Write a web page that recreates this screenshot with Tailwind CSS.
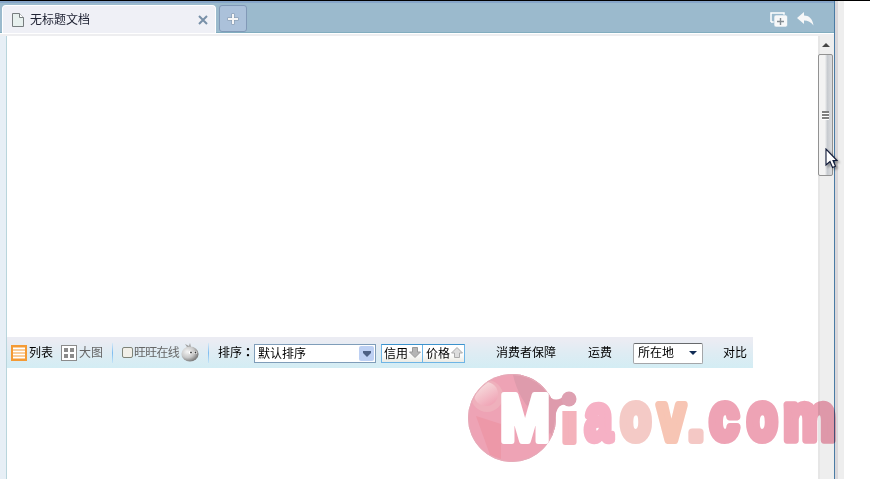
<!DOCTYPE html>
<html lang="zh-CN">
<head>
<meta charset="utf-8">
<title>无标题文档</title>
<script src="https://cdn.jsdelivr.net/npm/@tailwindcss/browser@4"></script>
</head>
<body class="w-[870px] h-[479px] overflow-hidden bg-white text-black text-[12px] leading-[16px] font-['Liberation_Sans','Noto_Sans_CJK_SC',sans-serif]">
<div class="relative flex h-[479px] border-t border-black">
  <div class="flex w-[834px] shrink-0 flex-col">
    <header class="flex h-[32px] shrink-0 items-start border-t-2 border-t-[#86a5c9] border-b border-b-[#82adbf] bg-[#9bbacd]">
      <div class="ml-[2px] mt-[2px] flex h-[28px] w-[214px] items-center rounded-t-[4px] border border-b-0 border-white bg-[#eff0f6] pl-[9px] pr-[7px] text-[#202334]">
        <svg width="12" height="14" viewBox="0 0 12 14" class="shrink-0"><path d="M.5.5h7l4 4v9H.5z" fill="#e7f0ee" stroke="#777d7f"/><path d="M7.5.5v4h4" fill="#fff" stroke="#777d7f"/></svg>
        <span class="ml-[6px] whitespace-nowrap">无标题文档</span>
        <svg class="ml-auto" width="10" height="10" viewBox="0 0 10 10"><path d="M1 1l8 8M9 1L1 9" stroke="#7890a8" stroke-width="2"/></svg>
      </div>
      <div class="ml-[3px] mt-[2px] flex h-[27px] w-[28px] items-center justify-center rounded-[3px] border border-[#8199b7] bg-[#abc1da]">
        <svg width="12" height="12" viewBox="0 0 12 12"><path d="M6 .5v11M.5 6h11" stroke="#8395a8" stroke-width="3"/><path d="M6 1v10M1 6h10" stroke="#f6f6f6" stroke-width="2"/></svg>
      </div>
      <div class="ml-auto mr-[20px] mt-[9px] flex gap-[9px]">
        <svg width="18" height="16" viewBox="0 0 18 16"><path d="M1 10V1h13v2M1 10h3" fill="none" stroke="#fff" stroke-width="1.5"/><rect x="4" y="3" width="13.5" height="12" rx="2" fill="#f7f8f9" stroke="#9bbacd" stroke-width=".6"/><path d="M10.500 6v7M7 9.500h7" stroke="#858d93" stroke-width="1.400"/></svg>
        <svg width="17" height="14" viewBox="0 0 17 14"><path d="M0 6L7 0v3.500c5 0 8.500 3 9.500 10C14 10 11 8.500 7 8.500V12z" fill="#f6f7f8"/></svg>
      </div>
    </header>
    <div class="h-[3px] shrink-0 border-t border-white bg-[#eeeef0]"></div>
    <div class="flex flex-1">
      <div class="w-[7px] shrink-0 border-r border-[#b9d5dc] bg-[#e7eff6]"></div>
      <main class="flex w-[811px] shrink-0 flex-col">
        <div class="h-[301px] shrink-0"></div>
        <div class="flex h-[31px] w-[746px] shrink-0 items-center whitespace-nowrap bg-linear-to-b from-[#ebecf3] from-10% via-[#dfecf3] via-50% to-[#d3edf4]">
          <svg class="ml-[4px] mt-px" width="16" height="16" viewBox="0 0 16 16"><rect width="16" height="16" fill="#f49a34"/><path d="M2 3.500h12M2 6.500h12M2 9.500h12M2 12.500h12" stroke="#fff" stroke-width="2"/></svg>
          <span class="ml-[2px] w-[24px]">列表</span>
          <svg class="ml-[8px] mt-px" width="16" height="16" viewBox="0 0 16 16"><rect x=".5" y=".5" width="15" height="15" fill="#fff" stroke="#8b8b8b"/><path d="M3 3h4v4H3zM9 3h4v4H9zM3 9h4v4H3zM9 9h4v4H9z" fill="#8b8b8b"/></svg>
          <span class="ml-[2px] w-[24px] text-[#666]">大图</span>
          <span class="ml-[9px] h-[20px] w-px bg-linear-to-b from-[#d5e9f7] via-[#7dbcf0] to-[#c5e5f8]"></span>
          <span class="ml-[9px] h-[11px] w-[11px] rounded-[2px] border border-[#7f8378] bg-[#f1efe8]"></span>
          <span class="ml-[1px] w-[47px] tracking-[-0.75px] text-[#666]">旺旺在线</span>
          <svg width="18" height="19" viewBox="0 0 18 19"><defs><radialGradient id="ball" cx=".35" cy=".35" r=".65"><stop stop-color="#f4f4f4"/><stop offset=".6" stop-color="#c8c8c8"/><stop offset="1" stop-color="#808080"/></radialGradient></defs><path d="M6 4L4 1l4 2 1-3 1 4z" fill="#a0a0a0"/><ellipse cx="9" cy="11" rx="8.600" ry="7.500" fill="url(#ball)"/><circle cx="9.500" cy="9.500" r="1.800" fill="#fff"/><circle cx="14.500" cy="9.500" r="1.600" fill="#fff"/><circle cx="10" cy="9.500" r=".9" fill="#333"/><circle cx="14.500" cy="9.500" r=".9" fill="#333"/></svg>
          <span class="ml-[9px] h-[20px] w-px bg-linear-to-b from-[#d5e9f7] via-[#7dbcf0] to-[#c5e5f8]"></span>
          <span class="ml-[9px] w-[36px]">排序<span lang="zh-TW" class="font-['Noto_Sans_CJK_TC'] font-bold">：</span></span>
          <div class="mt-[2px] flex h-[19px] w-[122px] items-center border border-[#7f9db9] bg-white pl-[3px] pr-px">
            <span>默认排序</span>
            <span class="ml-auto flex h-[15px] w-[15px] items-center justify-center rounded-[2px] bg-[#bdd0f3]"><svg width="8" height="6" viewBox="0 0 8 6"><path d="M0 0h8v2L4 6 0 2z" fill="#4d6185"/></svg></span>
          </div>
          <div class="ml-[5px] mt-[2px] flex h-[19px] w-[84px] border border-[#6eb5e5] border-t-[#3c92cc] bg-linear-to-b from-white from-50% to-[#ebebe5]">
            <div class="flex w-[41px] items-center border-r border-[#6eb5e5] pl-[2px]"><span class="w-[25px]">信用</span><svg class="-mt-[2px]" width="12" height="11" viewBox="0 0 12 11"><path d="M3.500.5h5V5h3L6 10.500.5 5h3z" fill="#b5b5b5" stroke="#999"/></svg></div>
            <div class="flex items-center pl-[3px]"><span class="w-[25px]">价格</span><svg class="-mt-[2px]" width="12" height="11" viewBox="0 0 12 11"><path d="M3.500 10.500h5V6h3L6 .5.5 6h3z" fill="#ddd" stroke="#aaa"/></svg></div>
          </div>
          <span class="ml-[31px] w-[60px]">消费者保障</span>
          <span class="ml-[32px] w-[24px]">运费</span>
          <div class="ml-[21px] mt-px flex h-[21px] w-[70px] items-center rounded-[2px] border border-[#a4a6a9] border-t-[#67696c] bg-white pl-[4px] pr-[5px]">
            <span>所在地</span>
            <svg class="ml-auto" width="8" height="4" viewBox="0 0 8 4"><path d="M0 0h8L4 4z" fill="#112c55"/></svg>
          </div>
          <span class="ml-[20px] w-[24px]">对比</span>
        </div>
      </main>
      <aside class="flex w-[16px] shrink-0 flex-col border-l-2 border-[#e6e6e6] bg-[#eee]">
        <svg class="ml-[2px] mt-[7px] shrink-0" width="8" height="4" viewBox="0 0 8 4"><path d="M4 0l4 4H0z" fill="#454545"/></svg>
        <div class="-ml-[2px] mt-[7px] flex h-[122px] w-[15px] shrink-0 items-center justify-center rounded-[2px] border border-[#929292] bg-linear-to-r from-[#f3f3f3] from-45% via-[#c7cbd0] via-65% to-[#dcdde0]">
          <svg width="8" height="9" viewBox="0 0 8 9"><path d="M0 1.500h7M0 4.500h7M0 7.500h7" stroke="#fff" stroke-width="3"/><path d="M0 1h7M0 4h7M0 7h7" stroke="#555" stroke-width="1.300"/></svg>
        </div>
      </aside>
    </div>
  </div>
  <div class="w-px bg-[#4a7ba4]"></div>
  <div class="w-[3px] bg-[#dad7da]"></div>
  <div class="w-[6px] bg-[#eee]"></div>

  <svg class="absolute left-[465px] top-[367px] overflow-visible" width="390" height="100" viewBox="465 368 390 100">
    <defs>
      <clipPath id="disc"><circle cx="512" cy="418" r="44"/></clipPath>
      <clipPath id="stem"><path d="M555 411h30v40h-30z"/></clipPath>
      <linearGradient id="shine" x2=".6" y2="1"><stop stop-color="#f8e9e6"/><stop offset="1" stop-color="#f0a6b7"/></linearGradient>
    </defs>
    <circle cx="512" cy="418" r="44" fill="#eea3b5"/>
    <g clip-path="url(#disc)">
      <path d="M512 370Q517 399 538 418T548 446L570 430V370z" fill="#de9bac"/>
      <path d="M476 416L501 424V459L490 455z" fill="#ed98a8"/>
      <circle cx="487" cy="396" r="16" fill="#efb0bc"/>
      <circle cx="486" cy="394" r="12" fill="url(#shine)"/>
    </g>
    <circle cx="512" cy="418" r="43.500" fill="none" stroke="#e5acb9"/>
    <path d="M546 393Q555 405 565 395L572 406Q559 401 556 413L553 427 546 440z" fill="#de9bac"/>
    <circle cx="569" cy="399" r="7.500" fill="#dea0b1"/>
    <g font-family="Liberation Sans, sans-serif" font-weight="700" stroke-width="9" stroke-linejoin="round">
      <text x="500" y="441" font-size="66" textLength="50" lengthAdjust="spacingAndGlyphs" fill="#fff" stroke="#fff" stroke-width="6">M</text>
      <text x="561" y="441.500" font-size="64" textLength="17" lengthAdjust="spacingAndGlyphs" fill="#f4b2bb" stroke="#f4b2bb" stroke-width="6" clip-path="url(#stem)">i</text>
      <text x="585" y="439.500" font-size="64" textLength="27" lengthAdjust="spacingAndGlyphs" fill="#f6b1c5" stroke="#f6b1c5" stroke-width="7.500">a</text>
      <text x="621" y="439" font-size="64" textLength="29.500" lengthAdjust="spacingAndGlyphs" fill="#f4cac6" stroke="#f4cac6">o</text>
      <text x="658" y="440" font-size="66" textLength="27" lengthAdjust="spacingAndGlyphs" fill="#f7c5b4" stroke="#f7c5b4" stroke-width="8">v</text>
      <text x="689" y="440" font-size="50" textLength="14" lengthAdjust="spacingAndGlyphs" fill="#f4c8c5" stroke="#f4c8c5" stroke-width="8">.</text>
      <g fill="#eea3b5" stroke="#eea3b5" class="mix-blend-multiply">
        <text x="710" y="439" font-size="64" textLength="28.500" lengthAdjust="spacingAndGlyphs">c</text>
        <text x="747.500" y="439" font-size="64" textLength="29.500" lengthAdjust="spacingAndGlyphs">o</text>
        <text x="783" y="440" font-size="66" textLength="53" lengthAdjust="spacingAndGlyphs" stroke-width="7.500">m</text>
      </g>
    </g>
  </svg>

  <svg class="absolute left-[825px] top-[147px] drop-shadow-[2px_2px_1px_rgba(0,0,0,0.35)]" width="14" height="21" viewBox="0 0 14 21"><path d="M1 1v16l4-3.500 2.500 6 3-1.300L8 12.500h4z" fill="#fff" stroke="#111a38" stroke-width="1.100"/></svg>
</div>
</body>
</html>
